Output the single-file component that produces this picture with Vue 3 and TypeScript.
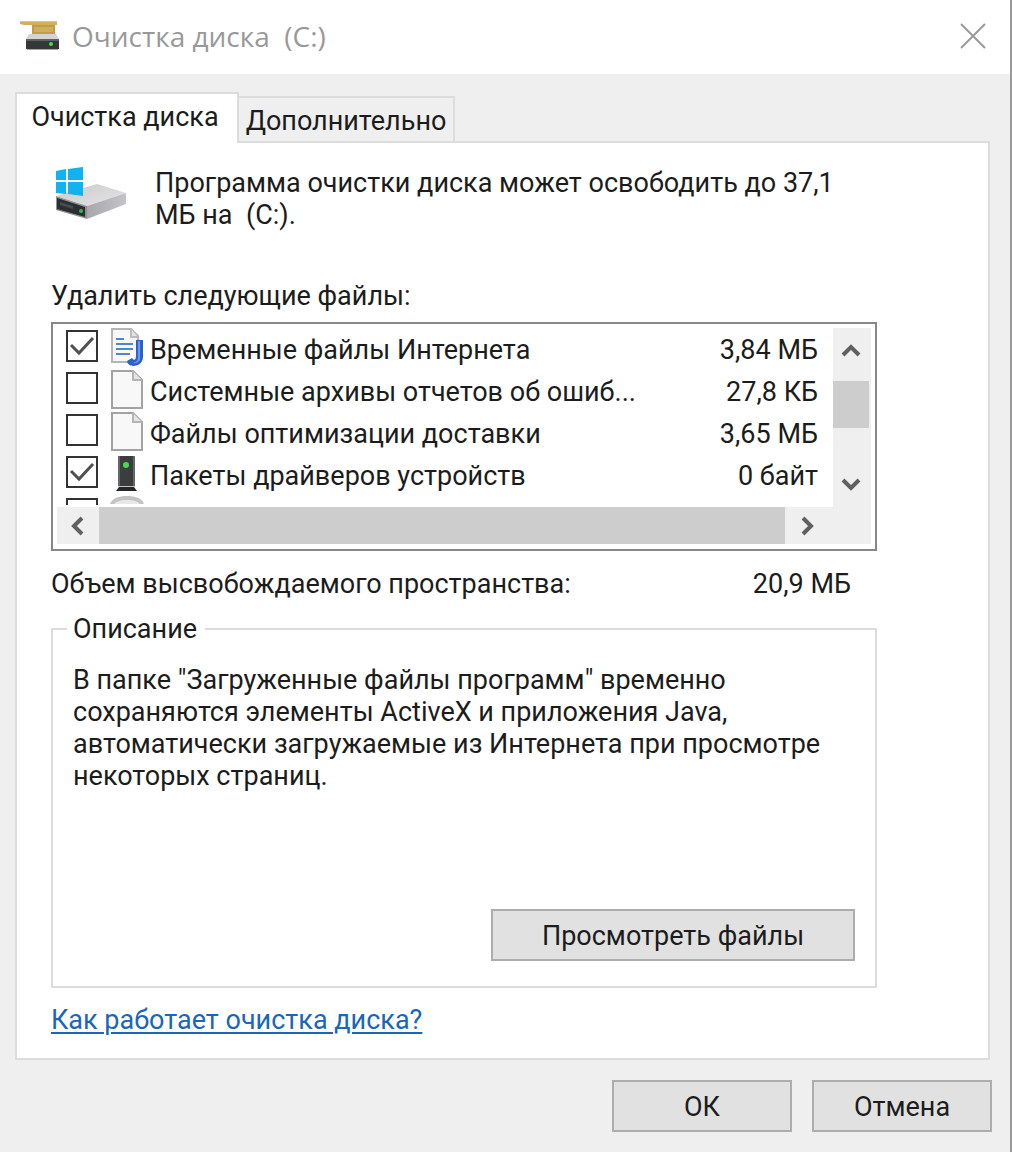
<script setup lang="ts">
import { reactive, ref } from 'vue'

type IconKind = 'internet' | 'page' | 'device' | 'disk'

interface CleanupItem {
  name: string
  size: string
  icon: IconKind
  checked: boolean
}

const activeTab = ref(0)
const tabs: string[] = ['Очистка диска', 'Дополнительно']

const items = reactive<CleanupItem[]>([
  { name: 'Временные файлы Интернета', size: '3,84 МБ', icon: 'internet', checked: true },
  { name: 'Системные архивы отчетов об ошиб...', size: '27,8 КБ', icon: 'page', checked: false },
  { name: 'Файлы оптимизации доставки', size: '3,65 МБ', icon: 'page', checked: false },
  { name: 'Пакеты драйверов устройств', size: '0 байт', icon: 'device', checked: true },
  { name: '', size: '', icon: 'disk', checked: false },
])
</script>

<template>
  <main class="window">
    <header class="titlebar">
      <svg class="title-icon" viewBox="0 0 40 32" aria-hidden="true">
        <path d="M0 1h37v4H4L0 4z" fill="#d3b055" />
        <path d="M0 1h37v1H0z" fill="#e2c67a" />
        <path d="M12 5h23v10H12z" fill="#c39c46" />
        <path d="M14 7h19v5H14z" fill="#cfae60" />
        <path d="M9 14h27l3 5H6z" fill="#d4d4d4" />
        <path d="M6 19h33v10H6z" fill="#353839" />
        <path d="M6 19h33v2H6z" fill="#5d6061" />
        <path d="M7 29h31v1H7z" fill="#a5a5a5" />
        <circle cx="31" cy="24" r="2" fill="#3de04d" />
      </svg>
      <h1 class="title">Очистка диска&nbsp; (C:)</h1>
      <button class="close" type="button" aria-label="Закрыть">
        <svg viewBox="0 0 26 26" aria-hidden="true">
          <path d="M1 1 25 25M25 1 1 25" fill="none" stroke="#999" stroke-width="2" />
        </svg>
      </button>
    </header>

    <div class="body">
      <div class="tabs" role="tablist">
        <button
          v-for="(tab, i) in tabs"
          :key="tab"
          type="button"
          role="tab"
          class="tab"
          :class="{ active: activeTab === i }"
          :aria-selected="activeTab === i"
          @click="activeTab = i"
        >
          {{ tab }}
        </button>
      </div>

      <section class="panel" role="tabpanel">
        <div class="intro">
          <svg class="drive" viewBox="0 0 72 54" aria-hidden="true">
            <defs>
              <linearGradient id="driveTop" x1="0" y1="0" x2="1" y2="1">
                <stop offset="0" stop-color="#c9c9cb" />
                <stop offset="1" stop-color="#e6e6e8" />
              </linearGradient>
              <linearGradient id="driveSide" x1="0" y1="0" x2="1" y2="0">
                <stop offset="0" stop-color="#a8a8ac" />
                <stop offset="1" stop-color="#c4c4c8" />
              </linearGradient>
            </defs>
            <path d="M1 29 42 17 71 26 32 39z" fill="url(#driveTop)" />
            <path d="M32 39 71 26v11L32 52z" fill="url(#driveSide)" />
            <path d="M1 29 32 39v13L1 43z" fill="#8f9193" />
            <path d="M2 31 30 40v10L2 42z" fill="#2c2f31" />
            <path d="M5 35 18 39v3L5 38z" fill="#484c4e" />
            <circle cx="26" cy="44" r="2" fill="#35b84a" />
            <path d="M1 4 11 2v11H1zM13 2 28 0v13H13zM1 15h10v12L1 26zM13 15h15v14l-15-2z" fill="#12b2ee" />
          </svg>
          <p class="intro-text">Программа очистки диска может освободить до 37,1 МБ на&nbsp; (C:).</p>
        </div>

        <h2 class="label" id="files-label">Удалить следующие файлы:</h2>

        <div class="listbox">
          <div class="list-main">
            <ul class="rows" aria-labelledby="files-label">
              <li v-for="(item, i) in items" :key="i">
                <label class="row">
                  <span class="check">
                    <input v-model="item.checked" type="checkbox" :aria-label="item.name || undefined" />
                    <svg v-if="item.checked" viewBox="0 0 32 32" aria-hidden="true">
                      <path d="M5 15 13 23 27 8" fill="none" stroke="#505050" stroke-width="3" />
                    </svg>
                  </span>
                  <svg class="file-icon" viewBox="0 0 34 40" aria-hidden="true">
                    <template v-if="item.icon === 'page'">
                      <path d="M2 1h21l9 9v28H2z" fill="#f8f8f8" stroke="#a3a3a3" stroke-width="2" />
                      <path d="M23 1v9h9" fill="#e4e4e4" stroke="#b4b4b4" stroke-width="2" />
                    </template>
                    <template v-if="item.icon === 'internet'">
                      <path d="M2 1h19l7 7v26H2z" fill="#f8f8f8" stroke="#b5b5b5" stroke-width="2" />
                      <path d="M21 1v8h7" fill="#e4e4e4" stroke="#bcbcbc" stroke-width="2" />
                      <path d="M6 11h8M6 16h17M6 21h17M6 26h14" stroke="#4f86cf" stroke-width="2" />
                      <path d="M26 12h7v17c0 10-15 12-16 4l5-3c2 3 4 2 4-2z" fill="#2b62c9" />
                      <path d="M28 13h2v17c0 3-3 6-7 5 4-1 5-3 5-6z" fill="#6b9bed" />
                    </template>
                    <template v-if="item.icon === 'device'">
                      <path d="M8 2h17v31H8z" fill="#3b3d3e" />
                      <path d="M8 2h2v31H8zM23 2h2v31h-2z" fill="#65686a" />
                      <path d="M9 33h15l3 4H6z" fill="#252728" />
                      <path d="M8 32h17v1H8z" fill="#c4c4c4" />
                      <circle cx="16" cy="11" r="3" fill="#43dc4d" />
                    </template>
                    <template v-if="item.icon === 'disk'">
                      <path d="M0 8C2 2 9 0 17 0s15 2 17 8z" fill="#c3c3c3" />
                      <path d="M4 8c3-3 7-4 13-4s10 1 13 4z" fill="#e9e9e9" />
                    </template>
                  </svg>
                  <span class="name">{{ item.name }}</span>
                  <span class="size">{{ item.size }}</span>
                </label>
              </li>
            </ul>
            <div class="vbar">
              <button type="button" aria-label="Вверх">
                <svg viewBox="0 0 20 20" aria-hidden="true"><path d="M2 15 10 7l8 8" /></svg>
              </button>
              <div class="vtrack"><div class="vthumb"></div></div>
              <button type="button" aria-label="Вниз">
                <svg viewBox="0 0 20 20" aria-hidden="true"><path d="m2 5 8 8 8-8" /></svg>
              </button>
            </div>
          </div>
          <div class="hbar">
            <button type="button" aria-label="Влево">
              <svg viewBox="0 0 20 20" aria-hidden="true"><path d="m14 2-8 8 8 8" /></svg>
            </button>
            <div class="hthumb"></div>
            <button type="button" aria-label="Вправо">
              <svg viewBox="0 0 20 20" aria-hidden="true"><path d="m7 2 8 8-8 8" /></svg>
            </button>
            <div class="corner"></div>
          </div>
        </div>

        <div class="total">
          <span>Объем высвобождаемого пространства:</span>
          <span>20,9 МБ</span>
        </div>

        <fieldset class="group">
          <legend>Описание</legend>
          <p class="description">
            В папке "Загруженные файлы программ" временно сохраняются элементы ActiveX и приложения Java,
            автоматически загружаемые из Интернета при просмотре некоторых страниц.
          </p>
          <button class="btn view" type="button">Просмотреть файлы</button>
        </fieldset>

        <a class="help" href="#">Как работает очистка диска?</a>
      </section>

      <footer class="actions">
        <button class="btn" type="button">ОК</button>
        <button class="btn" type="button">Отмена</button>
      </footer>
    </div>
  </main>
</template>

<style>
body {
  margin: 0;
}
</style>

<style scoped>
* {
  box-sizing: border-box;
}

.window {
  display: flex;
  flex-direction: column;
  min-height: 100vh;
  border-right: 2px solid #999;
  background: #efefef;
  color: #1c1c1c;
  font-family: Roboto, 'Liberation Sans', sans-serif;
  font-size: 27px;
  line-height: 32px;
}

button {
  padding: 0;
  border: 0;
  border-radius: 0;
  background: none;
  color: inherit;
  font: inherit;
}

h1,
h2,
p,
ul {
  margin: 0;
  padding: 0;
  font-size: inherit;
  font-weight: 400;
  list-style: none;
}

.titlebar {
  display: flex;
  align-items: center;
  height: 74px;
  padding: 0 24px 3px 20px;
  background: #fff;
}

.title-icon {
  width: 40px;
  height: 32px;
}

.title {
  flex: 1;
  padding-left: 12px;
  color: #999;
  font-family: 'Open Sans', 'Noto Sans', sans-serif;
  font-size: 28px;
}

.close {
  display: grid;
  width: 26px;
  height: 26px;
}

.body {
  display: flex;
  flex: 1;
  flex-direction: column;
  padding: 18px 18px 20px 15px;
}

.tabs {
  display: flex;
  align-items: flex-end;
  height: 49px;
}

.tab {
  width: 216px;
  height: 45px;
  padding-top: 2px;
  border: 2px solid #dcdcdc;
  border-left: 0;
  border-bottom: 0;
  white-space: nowrap;
}

.tab.active {
  z-index: 1;
  width: 224px;
  height: 51px;
  margin-bottom: -2px;
  padding: 0 4px 4px 0;
  border-left: 2px solid #dcdcdc;
  background: #fff;
}

.panel {
  display: flex;
  flex: 1;
  flex-direction: column;
  margin-right: 2px;
  padding: 24px 111px 22px 34px;
  border: 2px solid #dcdcdc;
  background: #fff;
}

.intro {
  display: flex;
  gap: 28px;
  padding-left: 4px;
}

.drive {
  flex: none;
  width: 72px;
  height: 54px;
}

.intro-text {
  flex: 1;
}

.label {
  margin: 49px 0 10px;
}

.listbox {
  padding: 4px 4px 5px;
  border: 2px solid #888;
}

.list-main {
  display: flex;
  height: 179px;
}

.rows {
  flex: 1;
  height: 177px;
  overflow: hidden;
}

.row {
  display: flex;
  align-items: flex-start;
  height: 42px;
  padding: 0 15px 0 9px;
}

.check {
  display: grid;
  width: 32px;
  height: 32px;
  margin: 2px 12px 0 0;
}

.check > * {
  grid-area: 1 / 1;
}

.check input {
  width: 32px;
  height: 32px;
  margin: 0;
  border: 2px solid #333;
  border-radius: 0;
  appearance: none;
  background: #fff;
}

.check svg {
  pointer-events: none;
}

.file-icon {
  flex: none;
  width: 34px;
  height: 40px;
}

.name {
  flex: 1;
  padding: 6px 0 0 6px;
}

.size {
  padding-top: 6px;
}

.vbar {
  display: flex;
  flex-direction: column;
  width: 38px;
  background: #efefef;
}

.vbar button {
  width: 36px;
  height: 44px;
}

.vbar svg,
.hbar svg {
  display: block;
  width: 20px;
  height: 20px;
  margin: auto;
  fill: none;
  stroke: #606060;
  stroke-width: 4;
}

.vtrack {
  flex: 1;
  padding-top: 9px;
}

.vthumb {
  width: 36px;
  height: 47px;
  background: #cdcdcd;
}

.hbar {
  display: flex;
  height: 37px;
  background: #efefef;
}

.hbar button {
  width: 42px;
}

.hthumb {
  flex: 1;
  background: #cdcdcd;
}

.corner {
  width: 44px;
}

.total {
  display: flex;
  justify-content: space-between;
  padding: 17px 26px 0 0;
}

.group {
  flex: 1;
  min-width: 0;
  margin: 13px 0 0;
  padding: 19px 20px 25px;
  border: 2px solid #dcdcdc;
}

.group legend {
  margin-left: -6px;
  padding: 0 8px 0 6px;
}

.description {
  min-height: 245px;
}

.btn {
  width: 180px;
  height: 52px;
  padding-top: 2px;
  border: 2px solid #adadad;
  background: #e1e1e1;
}

.btn.view {
  display: block;
  width: 364px;
  margin-left: auto;
}

.help {
  align-self: flex-start;
  margin-top: 16px;
  color: #1a66b8;
  text-decoration-thickness: 2px;
  text-underline-offset: 3px;
}

.actions {
  display: flex;
  justify-content: flex-end;
  gap: 20px;
  padding-top: 20px;
}
</style>
